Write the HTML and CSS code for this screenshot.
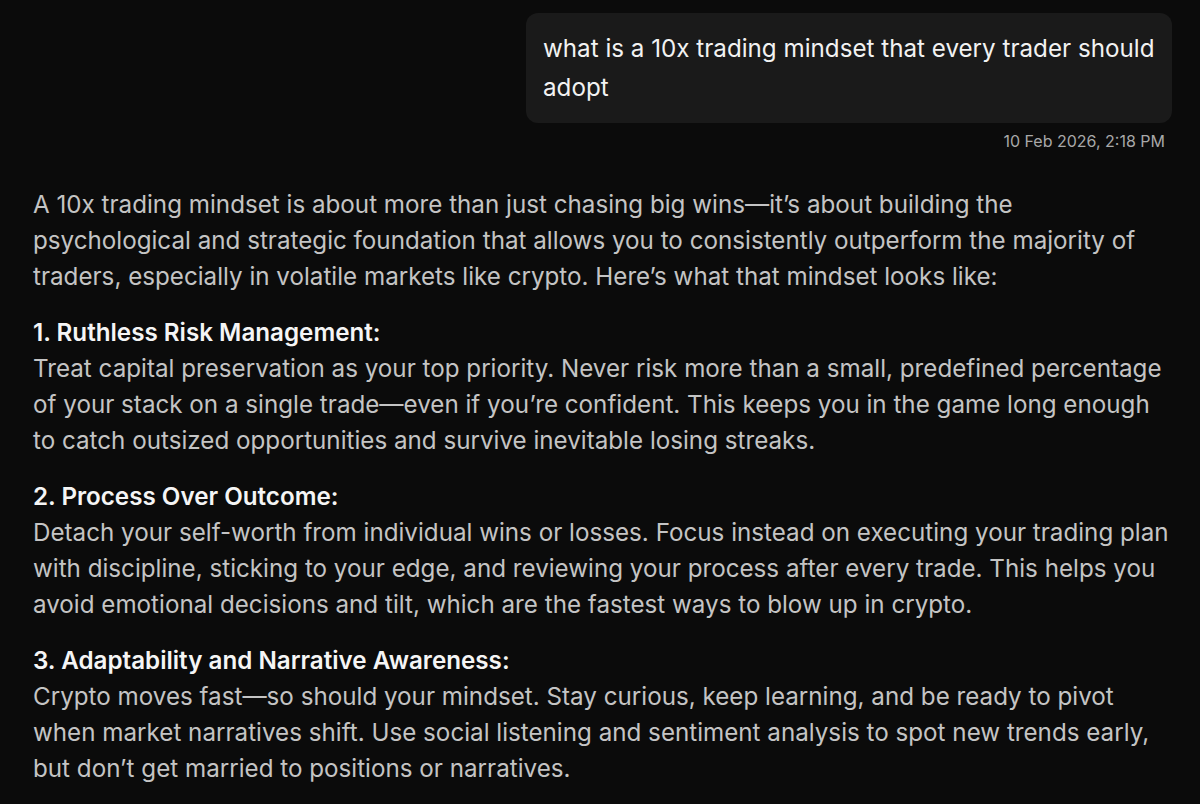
FILE: index.html
```html
<!DOCTYPE html>
<html>
<head>
<meta charset="utf-8">
<link rel="stylesheet" href="styles.css">
</head>
<body>
<div class="chat">
  <div class="user-row">
    <div class="bubble">what is a 10x trading mindset that every trader should adopt</div>
    <div class="time">10 Feb 2026, 2:18 PM</div>
  </div>
  <div class="answer">
    <p>A 10x trading mindset is about more than just chasing big wins—it’s about building the psychological and strategic foundation that allows you to consistently outperform the majority of traders, especially in volatile markets like crypto. Here’s what that mindset looks like:</p>
    <p><strong>1. Ruthless Risk Management:</strong><br>Treat capital preservation as your top priority. Never risk more than a small, predefined percentage of your stack on a single trade—even if you’re confident. This keeps you in the game long enough to catch outsized opportunities and survive inevitable losing streaks.</p>
    <p><strong>2. Process Over Outcome:</strong><br>Detach your self-worth from individual wins or losses. Focus instead on executing your trading plan with discipline, sticking to your edge, and reviewing your process after every trade. This helps you avoid emotional decisions and tilt, which are the fastest ways to blow up in crypto.</p>
    <p><strong>3. Adaptability and Narrative Awareness:</strong><br>Crypto moves fast—so should your mindset. Stay curious, keep learning, and be ready to pivot when market narratives shift. Use social listening and sentiment analysis to spot new trends early, but don’t get married to positions or narratives.</p>
  </div>
</div>
</body>
</html>
```
FILE: styles.css
```css
html, body {
  margin: 0;
  padding: 0;
  background: #0b0b0b;
  font-family: Inter, "Noto Sans", sans-serif;
  height: 100%;
  overflow: hidden;
}
.chat {
  padding: 13px 28px 0 33px;
  display: flex;
  flex-direction: column;
}
.user-row {
  display: flex;
  flex-direction: column;
  align-items: flex-end;
}
.bubble {
  box-sizing: border-box;
  max-width: 646px;
  background: #1a1a1a;
  color: #f2f2f2;
  font-size: 24.2px;
  line-height: 39px;
  padding: 16px 15px 16px 17px;
  border-radius: 12px;
}
.time {
  margin-top: 8px;
  margin-right: 7px;
  font-size: 16px;
  line-height: 20px;
  color: #a8a8a8;
}
.answer {
  margin-top: 36px;
  color: #c4c4c4;
  font-size: 24.2px;
  line-height: 36px;
}
.answer p {
  margin: 0 0 20px 0;
}
.answer strong {
  color: #f5f5f5;
  font-weight: 600;
}
```
